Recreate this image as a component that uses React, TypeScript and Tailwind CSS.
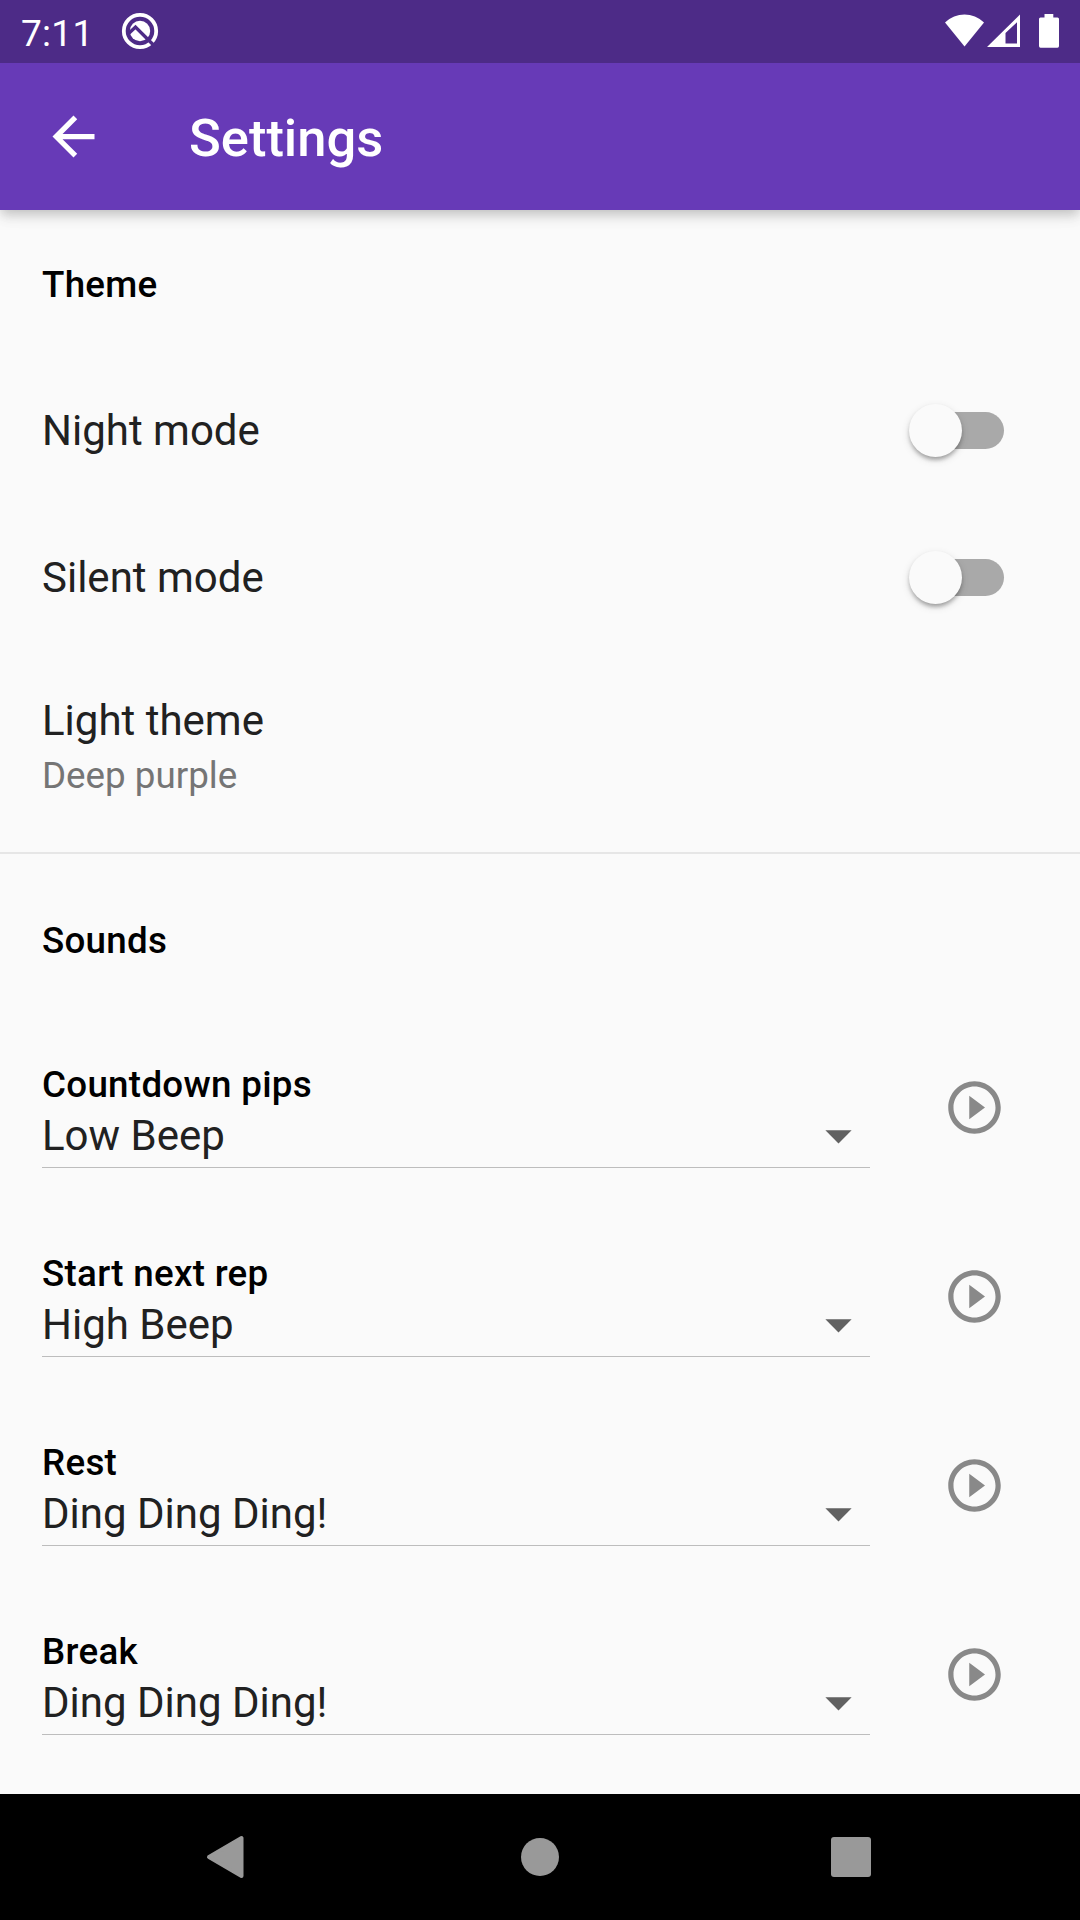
const ROBOTO = "font-['Roboto','Liberation_Sans',sans-serif]";

const sounds = [
  { label: "Countdown pips", value: "Low Beep" },
  { label: "Start next rep", value: "High Beep" },
  { label: "Rest", value: "Ding Ding Ding!" },
  { label: "Break", value: "Ding Ding Ding!" },
];

function StatusBar() {
  return (
    <div className="z-10 flex h-[63px] items-center bg-[#4d2b87] pl-[21px] pr-[20px] text-white">
      <span className="w-[100px] pt-[4px] text-[37px] leading-[60px] tracking-[0.3px]">7:11</span>
      <svg className="-mt-px h-[38px] w-[38px]" viewBox="0 0 38 38">
        <circle cx="19" cy="19" r="16.2" fill="none" stroke="#fff" strokeWidth="3.8" />
        <circle cx="19" cy="19" r="10.2" fill="#fff" />
        <path d="M6.500 22.500L14.500 15L35 35.500" fill="none" stroke="#4d2b87" strokeWidth="3.4" />
      </svg>
      <div className="-mt-px ml-auto flex items-center">
        <svg className="h-[34px] w-[115px]" viewBox="945 14 115 34">
          <path d="M945 22.5C956 11.7 973 11.7 984 22.5L964.5 46.5Z" fill="#fff" />
          <path fillRule="evenodd" d="M987 47L1020 14.5V47ZM1005.5 33V43.5H1017V22.3Z" fill="#fff" />
          <path d="M1044.500 14H1053.300V17.500H1057.500Q1059 17.500 1059 19V46Q1059 47.800 1057.500 47.800H1040.500Q1039 47.800 1039 46V19Q1039 17.500 1040.500 17.500H1044.500Z" fill="#fff" />
        </svg>
      </div>
    </div>
  );
}

function AppBar() {
  return (
    <header className="relative flex h-[147px] items-center bg-[#673ab7] pl-[42px] text-white shadow-[0_5px_10px_-2px_rgba(0,0,0,0.14),0_8px_12px_0_rgba(0,0,0,0.07),0_3px_20px_0_rgba(0,0,0,0.06)]">
      <svg className="h-[63px] w-[63px]" viewBox="0 0 24 24" fill="currentColor">
        <path d="M20 11H7.830l5.590-5.590L12 4l-8 8 8 8 1.410-1.410L7.830 13H20v-2z" />
      </svg>
      <h1 className="ml-[84px] pt-[2px] text-[52.5px] font-medium leading-[62px]">Settings</h1>
    </header>
  );
}

function Toggle() {
  return (
    <span className="relative mr-[34px] flex h-[53px] w-[95px] items-center justify-end">
      <span className="h-[37px] w-[87px] rounded-full bg-[#a9a9a9]" />
      <span className="absolute left-0 top-0 h-[53px] w-[53px] rounded-full bg-[#fafafa] shadow-[0_4px_4px_-2px_rgba(0,0,0,0.2),0_3px_4px_0_rgba(0,0,0,0.14),0_3px_9px_0_rgba(0,0,0,0.12)]" />
    </span>
  );
}

function SectionTitle({ children }: { children: string }) {
  return (
    <h2 className="flex h-[147px] items-center pl-[42px] pt-[2px] text-[36.75px] font-medium leading-[43px] tracking-[0.26px] text-black">
      {children}
    </h2>
  );
}

function SwitchRow({ label }: { label: string }) {
  return (
    <div className="flex h-[147px] items-center justify-between px-[42px]">
      <span className="text-[42px] leading-[50px]">{label}</span>
      <Toggle />
    </div>
  );
}

function SoundRow({ label, value }: { label: string; value: string }) {
  return (
    <div className="flex h-[189px] items-center pl-[42px]">
      <div className="w-[828px] border-b border-[#bdbdbd] pt-[14px]">
        <div className="-mb-[2px] text-[36.75px] font-medium leading-[43px] tracking-[0.28px] text-black">{label}</div>
        <div className="flex h-[63px] items-center justify-between">
          <span className="text-[42px] leading-[50px]">{value}</span>
          <svg className="h-[63px] w-[63px]" viewBox="0 0 24 24" fill="#616161">
            <path d="M7 10l5 5 5-5z" />
          </svg>
        </div>
      </div>
      <button className="-mt-[2px] ml-[73.4px]" aria-label={`Play ${label}`}>
        <svg className="h-[63px] w-[63px]" viewBox="0 0 24 24" fill="#898989">
          <path d="M10 16.500l6-4.500-6-4.500v9zM12 2C6.480 2 2 6.480 2 12s4.480 10 10 10 10-4.480 10-10S17.520 2 12 2zm0 18c-4.410 0-8-3.590-8-8s3.590-8 8-8 8 3.590 8 8-3.590 8-8 8z" />
        </svg>
      </button>
    </div>
  );
}

function NavBar() {
  return (
    <nav className="flex h-[126px] items-center justify-between bg-black pl-[206px] pr-[209px]">
      <svg className="h-[44px] w-[38px]" viewBox="0 0 38 44">
        <path d="M3 22L35.500 3V41Z" fill="#999" stroke="#999" strokeWidth="4" strokeLinejoin="round" />
      </svg>
      <span className="ml-[4px] h-[38px] w-[38px] rounded-full bg-[#999]" />
      <span className="h-[40px] w-[40px] rounded-[3px] bg-[#999]" />
    </nav>
  );
}

export default function App() {
  return (
    <div className={`${ROBOTO} flex h-[1920px] w-[1080px] flex-col overflow-hidden bg-[#fafafa] text-[#212121]`}>
      <StatusBar />
      <AppBar />
      <main className="flex-1 overflow-hidden">
        <section className="h-[644px] border-b-2 border-[#e6e6e6]">
          <SectionTitle>Theme</SectionTitle>
          <SwitchRow label="Night mode" />
          <SwitchRow label="Silent mode" />
          <div className="px-[42px] pt-[45px]">
            <div className="text-[42px] leading-[50px]">Light theme</div>
            <div className="mt-[8px] text-[36.75px] leading-[43px] text-[#757575]">Deep purple</div>
          </div>
        </section>
        <section className="pt-[12px]">
          <SectionTitle>Sounds</SectionTitle>
          <div className="pt-px">
            {sounds.map((s) => (
              <SoundRow key={s.label} label={s.label} value={s.value} />
            ))}
          </div>
        </section>
      </main>
      <NavBar />
    </div>
  );
}
